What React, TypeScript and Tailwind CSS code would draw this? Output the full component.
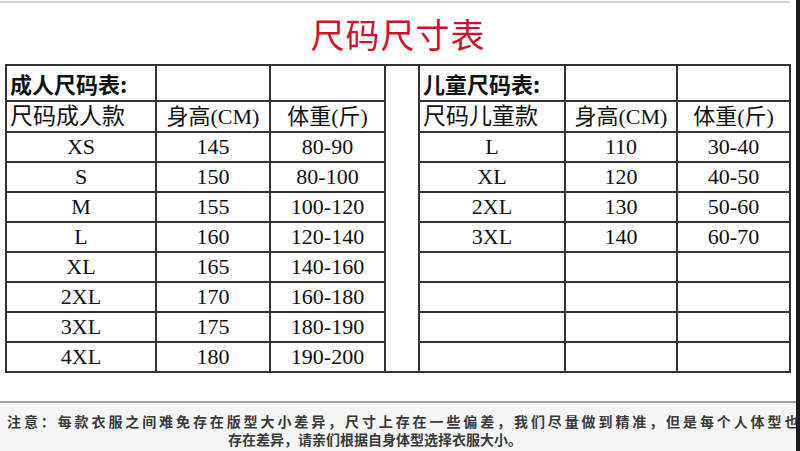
import React from "react";

const adultRows = [
  ["XS", "145", "80-90"],
  ["S", "150", "80-100"],
  ["M", "155", "100-120"],
  ["L", "160", "120-140"],
  ["XL", "165", "140-160"],
  ["2XL", "170", "160-180"],
  ["3XL", "175", "180-190"],
  ["4XL", "180", "190-200"],
];

const kidRows = [
  ["L", "110", "30-40"],
  ["XL", "120", "40-50"],
  ["2XL", "130", "50-60"],
  ["3XL", "140", "60-70"],
  ["", "", ""],
  ["", "", ""],
  ["", "", ""],
  ["", "", ""],
];

const serif = "font-['Liberation_Serif','Noto_Sans_CJK_SC',serif]";
const line = "border-[#333333]";

function SizeTable({
  cols,
  title,
  firstHead,
  rows,
}: {
  cols: string;
  title: string;
  firstHead: string;
  rows: string[][];
}) {
  return (
    <div className={`grid ${cols} border-x-2 ${line} text-[#111]`}>
      {/* title row */}
      <div className={`h-[36px] border-b-2 border-r-2 ${line} pl-[3px] flex items-center text-[22px] font-bold font-['Noto_Sans_CJK_SC',sans-serif] leading-none`}>
        {title}
      </div>
      <div className={`h-[36px] border-b-2 border-r-2 ${line}`} />
      <div className={`h-[36px] border-b-2 ${line}`} />

      {/* column heads */}
      <div className={`h-[31px] border-b-2 border-r-2 ${line} pl-[3px] flex items-center text-[23px] ${serif} leading-none`}>
        {firstHead}
      </div>
      <div className={`h-[31px] border-b-2 border-r-2 ${line} flex items-center justify-center text-[22px] ${serif} leading-none`}>
        身高(CM)
      </div>
      <div className={`h-[31px] border-b-2 ${line} flex items-center justify-center text-[22px] ${serif} leading-none`}>
        体重(斤)
      </div>

      {rows.map((r, i) => {
        const last = i === rows.length - 1;
        const b = last ? "h-[28px]" : "h-[30px] border-b-2";
        return (
          <React.Fragment key={i}>
            <div className={`${b} border-r-2 ${line} flex items-center justify-center text-[22px] ${serif} leading-none`}>
              {r[0]}
            </div>
            <div className={`${b} border-r-2 ${line} flex items-center justify-center text-[22px] ${serif} leading-none`}>
              {r[1]}
            </div>
            <div className={`${b} ${line} flex items-center justify-center text-[22px] ${serif} leading-none`}>
              {r[2]}
            </div>
          </React.Fragment>
        );
      })}
    </div>
  );
}

export default function App() {
  return (
    <div className="w-[800px] h-[451px] bg-white flex overflow-hidden">
      <div className="w-[796px] flex flex-col">
        <div className="h-[2px] mt-[1px] mr-[6px] bg-[#d4d4d4]" />

        {/* title */}
        <div className="h-[61px] flex items-center justify-center">
          <span className="text-[34px] leading-none text-[#d3102c] font-['Noto_Sans_CJK_SC',sans-serif] font-normal tracking-[1px]">
            尺码尺寸表
          </span>
        </div>

        {/* tables */}
        <div className={`ml-[5px] w-[786px] flex border-y-2 ${line}`}>
          <SizeTable
            cols="grid-cols-[150px_114px_113px]"
            title="成人尺码表:"
            firstHead="尺码成人款"
            rows={adultRows}
          />
          <div className="w-[32px]" />
          <SizeTable
            cols="grid-cols-[146px_112px_111px]"
            title="儿童尺码表:"
            firstHead="尺码儿童款"
            rows={kidRows}
          />
        </div>

        <div className="h-[28px]" />
        <div className="h-[2px] bg-[#a3a3a3]" />

        {/* note */}
        <div className="flex-1 bg-[#f6f6f6] pt-[9px] text-[14px] leading-[18px] font-bold text-[#3a3a3a] font-['Noto_Sans_CJK_SC',sans-serif] overflow-hidden">
          <div className="pl-[7px] whitespace-nowrap tracking-[2.9px]">
            注意：每款衣服之间难免存在版型大小差异，尺寸上存在一些偏差，我们尽量做到精准，但是每个人体型也
          </div>
          <div className="pl-[228px] whitespace-nowrap">
            存在差异，请亲们根据自身体型选择衣服大小。
          </div>
        </div>
      </div>
      <div className="w-[4px] bg-[#1c1c1c]" />
    </div>
  );
}
